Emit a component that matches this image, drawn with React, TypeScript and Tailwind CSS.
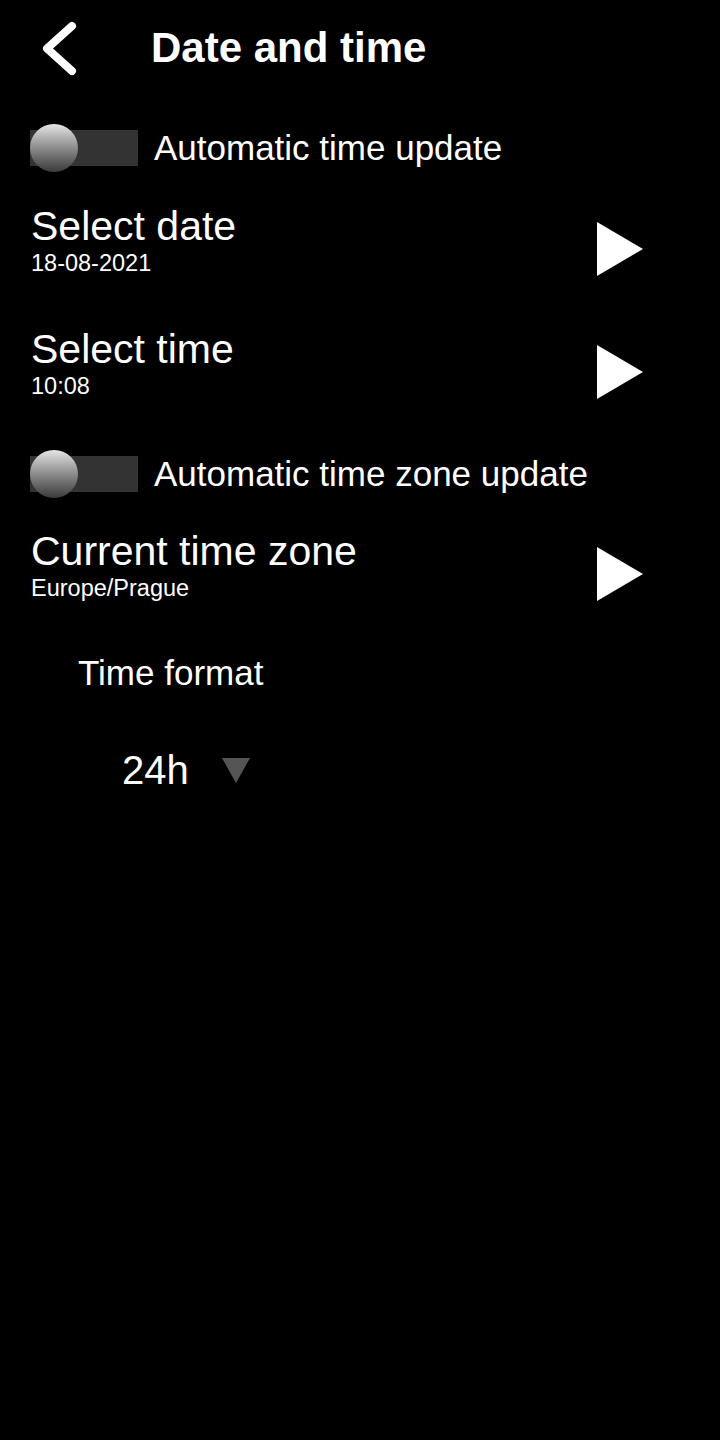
import React from 'react';

const font = { fontFamily: '"Liberation Sans", Arial, sans-serif' };

const Toggle: React.FC<{ label: string }> = ({ label }) => (
  <div className="flex items-center h-[48px] pl-[30px]">
    <div className="relative w-[108px] h-[36px] bg-[#333333]">
      <div className="absolute left-0 top-[-6px] w-[48px] h-[48px] rounded-full bg-gradient-to-b from-[#e6e6e6] to-[#3c3c3c]" />
    </div>
    <span className="ml-[16px] text-[35px] leading-[40px] text-white">{label}</span>
  </div>
);

const PlayArrow: React.FC = () => (
  <svg width="46" height="54" viewBox="0 0 46 54" className="mt-[18px] mr-[77px] shrink-0">
    <polygon points="0,0 46,27 0,54" fill="#ffffff" />
  </svg>
);

const NavRow: React.FC<{ title: string; value: string; className?: string }> = ({ title, value, className }) => (
  <div className={`flex items-start justify-between pl-[31px] ${className ?? ''}`}>
    <div className="flex flex-col">
      <span className="text-[41px] leading-[44px] text-white">{title}</span>
      <span className="text-[23.5px] leading-[30px] text-white">{value}</span>
    </div>
    <PlayArrow />
  </div>
);

const App: React.FC = () => {
  return (
    <div className="min-h-[1440px] w-[720px] bg-black text-white" style={font}>
      {/* Header */}
      <div className="flex items-center h-[96px]">
        <svg width="40" height="56" viewBox="0 0 40 56" className="ml-[40px] mt-[2px]">
          <path d="M32 5 L7 27.5 L32 50" fill="none" stroke="#ffffff" strokeWidth="8" strokeLinecap="round" strokeLinejoin="round" />
        </svg>
        <h1 className="ml-[71px] text-[42px] leading-[48px] font-bold">Date and time</h1>
      </div>

      <div className="mt-[28px]">
        <Toggle label="Automatic time update" />
      </div>

      <NavRow title="Select date" value="18-08-2021" className="mt-[32px]" />
      <NavRow title="Select time" value="10:08" className="mt-[49px]" />

      <div className="mt-[49px]">
        <Toggle label="Automatic time zone update" />
      </div>

      <NavRow title="Current time zone" value="Europe/Prague" className="mt-[31px]" />

      {/* Time format */}
      <div className="mt-[52px] pl-[78px] text-[35px] leading-[36px]">Time format</div>
      <div className="mt-[57px] flex items-center pl-[122px] h-[44px]">
        <span className="text-[40px] leading-[44px]">24h</span>
        <svg width="28" height="25" viewBox="0 0 28 25" className="ml-[33px]">
          <polygon points="0,0 28,0 14,25" fill="#555555" />
        </svg>
      </div>
    </div>
  );
};

export default App;
